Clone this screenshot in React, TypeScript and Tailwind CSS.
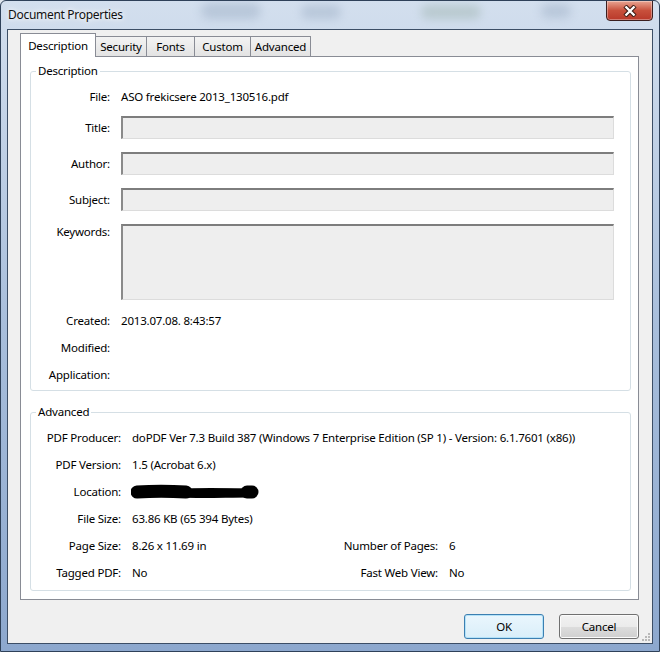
import React from "react";

function Tab({ label, active, w }: { label: string; active?: boolean; w: string }) {
  if (active) {
    return (
      <div className={`relative z-10 -mb-px flex h-[24px] items-start justify-center border-x border-t border-[#898c95] bg-white pt-[3px] ${w}`}>
        {label}
      </div>
    );
  }
  return (
    <div className={`flex h-[20px] items-center justify-center border-x border-t border-[#898c95] bg-gradient-to-b from-[#f3f3f3] to-[#e3e3e3] pt-[1px] -ml-px first:ml-0 ${w}`}>
      {label}
    </div>
  );
}

function Field({ h }: { h: string }) {
  return (
    <div className={`w-[493px] ${h} border-l-2 border-t-2 border-r border-b border-l-[#8a8a8a] border-t-[#7d7d7d] border-r-[#dcdcdc] border-b-[#dcdcdc] bg-[#eeeeee]`} />
  );
}

function Group({ title, h, mt, children }: { title: string; h: string; mt?: string; children: React.ReactNode }) {
  return (
    <div className={`relative ${h} ${mt ?? ""} rounded-[3px] border border-[#d5dfe5]`}>
      <span className="absolute left-[5px] top-[-9px] bg-white px-[2px] leading-[16px]">{title}</span>
      {children}
    </div>
  );
}

function Row({ label, lw, children, mt }: { label: string; lw: string; children?: React.ReactNode; mt?: string }) {
  return (
    <div className={`flex h-[20px] items-center gap-[11px] ${mt ?? ""}`}>
      <div className={`${lw} text-right`}>{label}</div>
      <div className="flex items-center">{children}</div>
    </div>
  );
}

export default function App() {
  return (
    <div className="h-[652px] w-[660px] bg-[#dfe6ee]">
      <div className="relative flex h-[652px] w-[660px] flex-col overflow-hidden rounded-t-[6px] border border-[#2f4159] bg-gradient-to-b from-[#d3dfee] via-[#a8bedb] to-[#8da8ce] px-[6px] pb-[7px] font-['Noto_Sans',sans-serif] text-[11.5px] tracking-[-0.2px] text-black">
        {/* blurred glass background shapes */}
        <div className="pointer-events-none absolute left-[200px] top-[2px] h-[16px] w-[60px] rounded-full bg-[#7e93ad] opacity-30 blur-[5px]" />
        <div className="pointer-events-none absolute left-[300px] top-[4px] h-[14px] w-[40px] rounded-full bg-[#7e93ad] opacity-30 blur-[5px]" />
        <div className="pointer-events-none absolute left-[420px] top-[4px] h-[14px] w-[60px] rounded-full bg-[#7f9a8a] opacity-30 blur-[5px]" />
        <div className="pointer-events-none absolute left-[540px] top-[3px] h-[14px] w-[30px] rounded-full bg-[#7e93ad] opacity-30 blur-[5px]" />

        {/* title bar */}
        <div className="relative flex h-[28px] shrink-0 items-center pl-[1px] pb-[1px]">
          <span className="text-[12px] tracking-[-0.3px] text-[#111] [text-shadow:0_0_8px_#ffffff,0_0_4px_#ffffff]">Document Properties</span>
        </div>
        <div className="absolute right-[6px] top-[-1px] flex h-[21px] w-[47px] items-center justify-center rounded-b-[4px] border border-[#3b1f1f] bg-gradient-to-b from-[#e8a493] via-[#c8503c] to-[#b9382a] shadow-[inset_0_0_0_1px_rgba(255,255,255,0.35)]">
          <svg width="14" height="12" viewBox="0 0 14 12">
            <path d="M2 1 L12 11 M12 1 L2 11" fill="none" stroke="#3a1a14" strokeWidth="4.4" />
            <path d="M2.5 1.5 L11.5 10.5 M11.5 1.5 L2.5 10.5" fill="none" stroke="#ffffff" strokeWidth="2.4" />
          </svg>
        </div>

        {/* client area */}
        <div className="relative flex flex-1 flex-col border border-[#3c4e66] bg-[#f0f0f0] pb-[4px] pl-[12px] pr-[13px] pt-[3px]">
          {/* tabs */}
          <div className="flex h-[23px] items-end">
            <Tab label="Description" active w="w-[76px]" />
            <Tab label="Security" w="w-[52px]" />
            <Tab label="Fonts" w="w-[49px]" />
            <Tab label="Custom" w="w-[57px]" />
            <Tab label="Advanced" w="w-[61px]" />
          </div>

          {/* panel */}
          <div className="flex h-[544px] flex-col border border-[#898c95] bg-white pl-[9px] pr-[7px] pt-[14px]">
            <Group title="Description" h="h-[320px]">
              <div className="flex flex-col pt-[15px]">
                <Row label="File:" lw="w-[79px]">ASO frekicsere 2013_130516.pdf</Row>
                <div className="mt-[9px] flex gap-[11px]">
                  <div className="w-[79px] text-right leading-[23px]">Title:</div>
                  <Field h="h-[23px]" />
                </div>
                <div className="mt-[13px] flex gap-[11px]">
                  <div className="w-[79px] text-right leading-[23px]">Author:</div>
                  <Field h="h-[23px]" />
                </div>
                <div className="mt-[13px] flex gap-[11px]">
                  <div className="w-[79px] text-right leading-[23px]">Subject:</div>
                  <Field h="h-[23px]" />
                </div>
                <div className="mt-[13px] flex gap-[11px]">
                  <div className="w-[79px] text-right leading-[16px]">Keywords:</div>
                  <Field h="h-[76px]" />
                </div>
                <Row label="Created:" lw="w-[79px]" mt="mt-[11px]">2013.07.08. 8:43:57</Row>
                <Row label="Modified:" lw="w-[79px]" mt="mt-[7px]" />
                <Row label="Application:" lw="w-[79px]" mt="mt-[7px]" />
              </div>
            </Group>

            <Group title="Advanced" h="h-[179px]" mt="mt-[21px]">
              <div className="flex flex-col gap-[7px] pt-[15px]">
                <Row label="PDF Producer:" lw="w-[90px]">
                  doPDF Ver 7.3 Build 387 (Windows 7 Enterprise Edition (SP 1) - Version: 6.1.7601 (x86))
                </Row>
                <Row label="PDF Version:" lw="w-[90px]">1.5 (Acrobat 6.x)</Row>
                <Row label="Location:" lw="w-[90px]">
                  <svg width="128" height="16" viewBox="0 0 128 16" className="-ml-px">
                    <path d="M6 8 C 20 7, 40 7, 55 8" fill="none" stroke="#000" strokeWidth="13" strokeLinecap="round" />
                    <path d="M50 9 C 70 10, 95 9, 118 9" fill="none" stroke="#000" strokeWidth="9" strokeLinecap="round" />
                    <path d="M58 6 C 80 5, 100 6, 118 6" fill="none" stroke="#000" strokeWidth="3" strokeLinecap="round" />
                    <path d="M116 8 L 121 8" fill="none" stroke="#000" strokeWidth="13" strokeLinecap="round" />
                  </svg>
                </Row>
                <Row label="File Size:" lw="w-[90px]">63.86 KB (65 394 Bytes)</Row>
                <div className="flex h-[20px] items-center">
                  <div className="w-[90px] text-right">Page Size:</div>
                  <div className="ml-[11px] w-[190px]">8.26 x 11.69 in</div>
                  <div className="w-[116px] text-right">Number of Pages:</div>
                  <div className="ml-[11px]">6</div>
                </div>
                <div className="flex h-[20px] items-center">
                  <div className="w-[90px] text-right">Tagged PDF:</div>
                  <div className="ml-[11px] w-[190px]">No</div>
                  <div className="w-[116px] text-right">Fast Web View:</div>
                  <div className="ml-[11px]">No</div>
                </div>
              </div>
            </Group>
          </div>

          {/* buttons */}
          <div className="mt-[14px] flex h-[25px] justify-end gap-[15px]">
            <button className="flex h-[25px] w-[80px] items-center justify-center rounded-[3px] border border-[#3c7fb1] bg-gradient-to-b from-[#eaf6fd] to-[#d9eef9] shadow-[inset_0_0_0_1px_#b4e2f8]">
              OK
            </button>
            <button className="flex h-[25px] w-[80px] items-center justify-center rounded-[3px] border border-[#707070] bg-[linear-gradient(to_bottom,#f2f2f2_0%,#ebebeb_50%,#dddddd_51%,#cfcfcf_100%)] shadow-[inset_0_0_0_1px_#fbfbfb]">
              Cancel
            </button>
          </div>

          {/* resize grip */}
          <svg className="absolute bottom-[1px] right-[1px]" width="10" height="10" viewBox="0 0 10 10">
            <g fill="#b8b8b8">
              <rect x="7" y="1" width="2" height="2" />
              <rect x="4" y="4" width="2" height="2" />
              <rect x="7" y="4" width="2" height="2" />
              <rect x="1" y="7" width="2" height="2" />
              <rect x="4" y="7" width="2" height="2" />
              <rect x="7" y="7" width="2" height="2" />
            </g>
          </svg>
        </div>
      </div>
    </div>
  );
}
